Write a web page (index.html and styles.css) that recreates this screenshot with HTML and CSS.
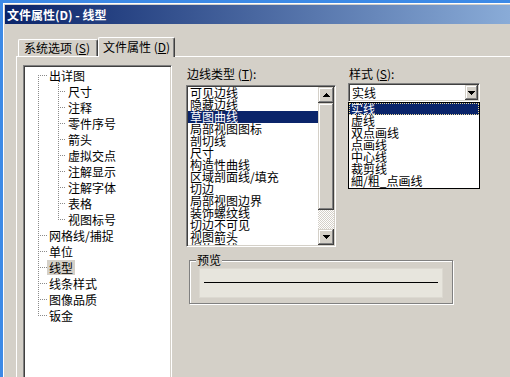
FILE: index.html
```html
<!DOCTYPE html>
<html lang="zh-CN">
<head>
<meta charset="utf-8">
<title>文件属性(D) - 线型</title>
<link rel="stylesheet" href="styles.css">
</head>
<body>
<div class="dialog">
  <div class="titlebar">文件属性(D) - 线型</div>
  <div class="client">
    <div class="tabs">
      <div class="tab">系统选项 (<u>S</u>)</div>
      <div class="tab active">文件属性 (<u>D</u>)</div>
    </div>
    <div class="pane">
      <div class="tree">
        <ul class="lv0">
          <li>
            <div class="row"><span class="h"></span><span class="t">出详图</span></div>
            <ul class="lv1">
              <li><div class="row"><span class="h"></span><span class="t">尺寸</span></div></li>
              <li><div class="row"><span class="h"></span><span class="t">注释</span></div></li>
              <li><div class="row"><span class="h"></span><span class="t">零件序号</span></div></li>
              <li><div class="row"><span class="h"></span><span class="t">箭头</span></div></li>
              <li><div class="row"><span class="h"></span><span class="t">虚拟交点</span></div></li>
              <li><div class="row"><span class="h"></span><span class="t">注解显示</span></div></li>
              <li><div class="row"><span class="h"></span><span class="t">注解字体</span></div></li>
              <li><div class="row"><span class="h"></span><span class="t">表格</span></div></li>
              <li><div class="row"><span class="h"></span><span class="t">视图标号</span></div></li>
            </ul>
          </li>
          <li><div class="row"><span class="h"></span><span class="t">网格线/捕捉</span></div></li>
          <li><div class="row"><span class="h"></span><span class="t">单位</span></div></li>
          <li><div class="row"><span class="h"></span><span class="t sel">线型</span></div></li>
          <li><div class="row"><span class="h"></span><span class="t">线条样式</span></div></li>
          <li><div class="row"><span class="h"></span><span class="t">图像品质</span></div></li>
          <li><div class="row"><span class="h"></span><span class="t">钣金</span></div></li>
        </ul>
      </div>
      <div class="right">
        <div class="cols">
          <div class="col1">
            <div class="lbl">边线类型 (<u>T</u>):</div>
            <div class="listbox">
              <div class="items">
                <div class="opt">可见边线</div>
                <div class="opt">隐藏边线</div>
                <div class="opt selected">草图曲线</div>
                <div class="opt">局部视图图标</div>
                <div class="opt">剖切线</div>
                <div class="opt">尺寸</div>
                <div class="opt">构造性曲线</div>
                <div class="opt">区域剖面线/填充</div>
                <div class="opt">切边</div>
                <div class="opt">局部视图边界</div>
                <div class="opt">装饰螺纹线</div>
                <div class="opt">切边不可见</div>
                <div class="opt">视图箭头</div>
                <div class="opt">爆炸直线</div>
              </div>
              <div class="vscroll">
                <div class="sbtn"><svg width="7" height="4" viewBox="0 0 7 4"><path d="M3 0h1v1h1v1h1v1h1v1H0V3h1V2h1V1h1z"/></svg></div>
                <div class="thumb"></div>
                <div class="track"></div>
                <div class="sbtn"><svg width="7" height="4" viewBox="0 0 7 4"><path d="M0 0h7v1h-1v1h-1v1h-1v1h-1v-1h-1v-1h-1v-1h-1z"/></svg></div>
              </div>
            </div>
          </div>
          <div class="col2">
            <div class="lbl">样式 (<u>S</u>):</div>
            <div class="combo">
              <div class="ctext">实线</div>
              <div class="cbtn"><svg width="7" height="4" viewBox="0 0 7 4"><path d="M0 0h7v1h-1v1h-1v1h-1v1h-1v-1h-1v-1h-1v-1h-1z"/></svg></div>
              <div class="droplist">
                <div class="dopt current">实线</div>
                <div class="dopt">虚线</div>
                <div class="dopt">双点画线</div>
                <div class="dopt">点画线</div>
                <div class="dopt">中心线</div>
                <div class="dopt">裁剪线</div>
                <div class="dopt">細/粗_点画线</div>
              </div>
            </div>
          </div>
        </div>
        <div class="group">
          <div class="gtitle">预览</div>
          <div class="preview">
            <div class="pline"></div>
          </div>
        </div>
      </div>
    </div>
  </div>
</div>
</body>
</html>
```

FILE: styles.css
```css
* { box-sizing: border-box; }
html, body { margin: 0; padding: 0; }
body {
  width: 510px;
  height: 377px;
  overflow: hidden;
  background: #3d8ae6;
  font-family: "Noto Sans CJK SC", "Liberation Sans", sans-serif;
  font-size: 12px;
  line-height: 16px;
  color: #000;
}
u { text-decoration: underline; text-underline-offset: 1px; }

.dialog {
  margin: 3px 0 0 3px;
  width: 620px;
  height: 420px;
  background: #d4d0c8;
  border-top: 1px solid #fff;
  border-left: 1px solid #fff;
  padding: 1px 0 0 1px;
}
.titlebar {
  height: 19px;
  line-height: 19px;
  padding-left: 2px;
  color: #fff;
  font-weight: bold;
  background: linear-gradient(to right, #0a246a, #a6caf0);
}
.client { padding: 13px 0 0 11px; }

.tabs {
  display: flex;
  align-items: flex-end;
  height: 19px;
  margin-left: 2px;
  position: relative;
  z-index: 1;
}
.tab {
  height: 17px;
  line-height: 16px;
  padding: 0 7px 0 5px;
  border-top: 1px solid #fff;
  border-left: 1px solid #fff;
  border-right: 1px solid #404040;
  box-shadow: inset -1px 0 #808080;
  border-radius: 2px 2px 0 0;
  background: #d4d0c8;
  white-space: nowrap;
}
.tab.active {
  height: 20px;
  line-height: 18px;
  margin-bottom: -1px;
  padding: 0 4px 0 4px;
}

.pane {
  display: flex;
  gap: 14px;
  border-top: 1px solid #fff;
  border-left: 1px solid #fff;
  padding: 8px 0 0 6px;
  height: 360px;
}

/* tree */
.tree {
  width: 149px;
  height: 330px;
  background: #fff;
  border: 1px solid;
  border-color: #808080 #fff #fff #808080;
  box-shadow: inset 1px 1px #404040, inset -1px -1px #d4d0c8;
  padding: 1px 0 0 14px;
  flex: none;
}
.tree ul { list-style: none; margin: 0; padding: 0; }
.tree .lv0 {
  background-image: repeating-linear-gradient(to bottom, #8a8a8a 0 1px, transparent 1px 2px);
  background-repeat: no-repeat;
  background-size: 1px calc(100% - 16px);
  background-position: 0 8px;
}
.tree .lv1 {
  margin-left: 20px;
  background-image: repeating-linear-gradient(to bottom, #8a8a8a 0 1px, transparent 1px 2px);
  background-repeat: no-repeat;
  background-size: 1px calc(100% - 8px);
  background-position: 0 0;
}
.row {
  display: flex;
  align-items: center;
  height: 16px;
}
.row .h {
  width: 9px;
  height: 1px;
  background: repeating-linear-gradient(to right, #8a8a8a 0 1px, transparent 1px 2px);
  flex: none;
}
.tree .lv1 .row .h { width: 8px; }
.row .t {
  padding: 0 2px;
  line-height: 15px;
  white-space: nowrap;
}
.row .t.sel { background: #d4d0c8; }

/* right side */
.right { display: flex; flex-direction: column; }
.cols { display: flex; gap: 12px; }
.col1 { width: 150px; }
.col2 { width: 132px; }
.lbl {
  height: 16px;
  line-height: 16px;
  margin-top: 1px;
  padding-left: 1px;
  white-space: nowrap;
}

.listbox {
  margin-top: 3px;
  height: 162px;
  display: flex;
  background: #fff;
  border: 1px solid;
  border-color: #808080 #fff #fff #808080;
  box-shadow: inset 1px 1px #404040, inset -1px -1px #d4d0c8;
  padding: 1px;
}
.items { flex: 1; overflow: hidden; }
.opt {
  height: 12px;
  line-height: 12px;
  padding-left: 2px;
  white-space: nowrap;
}
.opt.selected { background: #0a246a; color: #fff; }

.vscroll {
  width: 16px;
  display: flex;
  flex-direction: column;
}
.sbtn, .thumb, .cbtn {
  background: #d4d0c8;
  box-shadow: inset -1px -1px #404040, inset 1px 1px #d4d0c8, inset -2px -2px #808080, inset 2px 2px #fff;
}
.sbtn {
  height: 16px;
  display: flex;
  align-items: center;
  justify-content: center;
}
.sbtn svg, .cbtn svg { display: block; fill: #000; }
.thumb { height: 107px; }
.track {
  flex: 1;
  background: repeating-conic-gradient(#fff 0 25%, #d4d0c8 0 50%) 0 0 / 2px 2px;
}

.combo {
  position: relative;
  margin-top: 1px;
  height: 19px;
  display: flex;
  background: #fff;
  border: 1px solid;
  border-color: #808080 #fff #fff #808080;
  box-shadow: inset 1px 1px #404040, inset -1px -1px #d4d0c8;
  padding: 1px;
}
.ctext {
  flex: 1;
  line-height: 15px;
  padding-left: 2px;
}
.cbtn {
  width: 13px;
  height: 15px;
  display: flex;
  align-items: center;
  justify-content: center;
}
.droplist {
  position: absolute;
  left: -1px;
  top: 18px;
  width: 132px;
  padding-bottom: 1px;
  background: #fff;
  border: 1px solid #000;
  z-index: 2;
}
.dopt {
  height: 12px;
  line-height: 11px;
  padding-left: 2px;
  white-space: nowrap;
}
.dopt.current {
  background: #0a246a;
  color: #fff;
  outline: 1px dotted #e9d99a;
  outline-offset: -1px;
}

/* preview group */
.group {
  margin: 13px 0 0 3px;
  width: 264px;
  height: 44px;
  border: 1px solid #808080;
  box-shadow: 1px 1px 0 #fff, inset 1px 1px 0 #fff;
  padding: 0 9px;
}
.gtitle {
  margin: -8px 0 0 -3px;
  width: fit-content;
  padding: 0 1px;
  line-height: 14px;
  height: 14px;
  background: #d4d0c8;
}
.preview {
  margin-top: 1px;
  height: 30px;
  background: #e7e5dd;
  border: 1px solid #dcd9d1;
  padding: 13px 4px 0;
}
.pline { height: 1px; background: #000; }
```
